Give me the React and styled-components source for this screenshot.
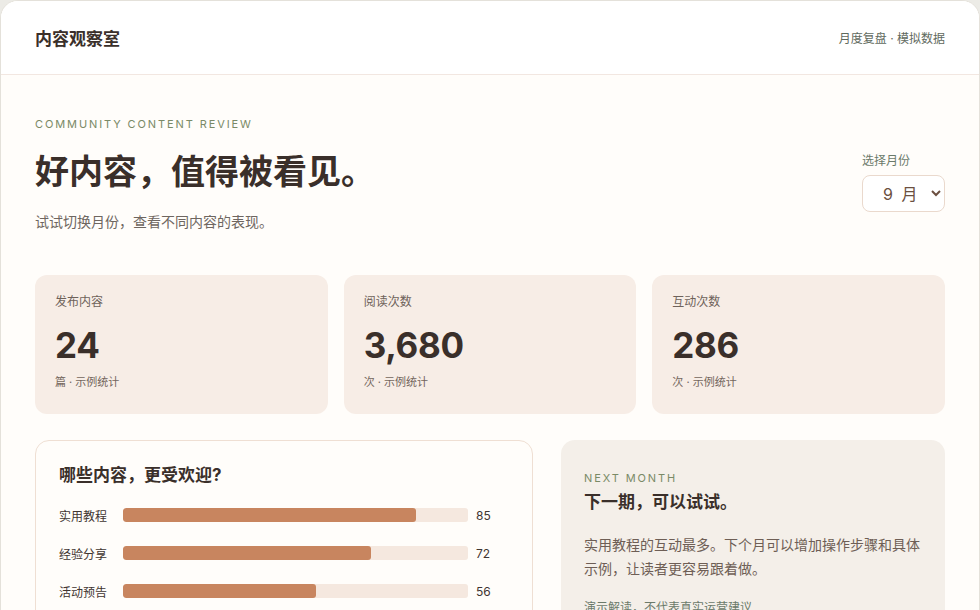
import React, { useState } from 'react';
import styled, { createGlobalStyle } from 'styled-components';

const GlobalStyle = createGlobalStyle`
  html, body {
    margin: 0;
    padding: 0;
    background: #ecebe6;
  }
  body {
    font-family: Inter, "Noto Sans CJK SC", sans-serif;
    color: #3a2f2a;
  }
`;

const Frame = styled.div`
  width: 980px;
  box-sizing: border-box;
  border: 1px solid #e4e1da;
  border-radius: 18px;
  overflow: hidden;
  background: #fffdfa;
`;

const Header = styled.header`
  height: 73px;
  padding: 0 34px;
  display: flex;
  align-items: center;
  justify-content: space-between;
  background: #ffffff;
  border-bottom: 1px solid #f2e7e1;
`;

const Brand = styled.div`
  font-size: 17px;
  font-weight: 700;
  color: #3a2f2a;
`;

const HeaderNote = styled.div`
  font-size: 12px;
  color: #5f6a5e;
`;

const Main = styled.main`
  padding: 41px 34px 40px;
`;

const Hero = styled.section`
  display: flex;
  justify-content: space-between;
  align-items: flex-end;
`;

const Eyebrow = styled.div`
  font-size: 11px;
  line-height: 16px;
  letter-spacing: 1.9px;
  color: #7a8a66;
  text-transform: uppercase;
`;

const Title = styled.h1`
  margin: 19px 0 0;
  font-size: 34px;
  line-height: 41px;
  font-weight: 700;
  color: #3a2f2a;
`;

const Subtitle = styled.p`
  margin: 20px 0 0;
  font-size: 14px;
  line-height: 20px;
  color: #6e6660;
`;

const MonthControl = styled.label`
  display: flex;
  flex-direction: column;
  gap: 6px;
  margin-bottom: 20px;
  font-size: 12px;
  line-height: 16px;
  color: #6b7a6a;
`;

const Select = styled.select`
  width: 83px;
  height: 37px;
  padding: 0 8px 0 16px;
  border: 1px solid #ead9cd;
  border-radius: 8px;
  background: #ffffff;
  font-family: Inter, "Noto Sans CJK SC", sans-serif;
  font-size: 16px;
  letter-spacing: 2px;
  color: #6b4f40;
`;

const Stats = styled.section`
  margin-top: 43px;
  display: grid;
  grid-template-columns: repeat(3, 1fr);
  gap: 16px;
`;

const StatCard = styled.div`
  height: 139px;
  box-sizing: border-box;
  padding: 19px 20px;
  border-radius: 12px;
  background: #f7ede6;
`;

const StatLabel = styled.div`
  font-size: 12px;
  line-height: 16px;
  color: #6e625a;
`;

const StatValue = styled.div`
  margin-top: 13px;
  font-size: 35px;
  line-height: 44px;
  font-weight: 700;
  letter-spacing: -0.3px;
  color: #3a2f2a;
`;

const StatNote = styled.div`
  margin-top: 7px;
  font-size: 11px;
  line-height: 16px;
  color: #74665d;
`;

const Lower = styled.section`
  margin-top: 26px;
  display: grid;
  grid-template-columns: 498px 1fr;
  gap: 28px;
  align-items: start;
`;

const ChartCard = styled.div`
  padding: 22px 24px 24px 23px;
  border: 1px solid #efdfd3;
  border-radius: 14px;
  background: #fffdfa;
`;

const CardTitle = styled.h2`
  margin: 0;
  font-size: 17px;
  line-height: 24px;
  font-weight: 700;
  color: #3a2f2a;
`;

const Rows = styled.div`
  margin-top: 18px;
  display: flex;
  flex-direction: column;
  gap: 18px;
`;

const Row = styled.div`
  display: grid;
  grid-template-columns: 56px 1fr 32px;
  column-gap: 8px;
  align-items: center;
  height: 20px;
  font-size: 12px;
  color: #3f3531;
`;

const Track = styled.div`
  height: 14px;
  border-radius: 3px;
  background: #f5e8df;
  overflow: hidden;
`;

const Fill = styled.div`
  height: 100%;
  border-radius: 3px;
  background: #c8855f;
`;

const Value = styled.span`
  font-size: 12px;
  color: #3f3531;
`;

const AdviceCard = styled.div`
  padding: 30px 20px 30px 23px;
  border-radius: 14px;
  background: #f4efe9;
`;

const AdviceTitle = styled(CardTitle)`
  margin-top: 4px;
`;

const AdviceText = styled.p`
  margin: 19px 0 0;
  font-size: 14px;
  line-height: 24px;
  color: #6e5e55;
`;

const AdviceNote = styled.p`
  margin: 19px 0 0;
  font-size: 12px;
  line-height: 16px;
  color: #6b7a6a;
`;

const data = {
  8: { posts: '21', reads: '3,120', actions: '241', bars: [['实用教程', 78], ['经验分享', 69], ['活动预告', 60]] },
  9: { posts: '24', reads: '3,680', actions: '286', bars: [['实用教程', 85], ['经验分享', 72], ['活动预告', 56]] },
  10: { posts: '27', reads: '4,010', actions: '312', bars: [['实用教程', 88], ['经验分享', 75], ['活动预告', 52]] },
};

const App = () => {
  const [month, setMonth] = useState('9');
  const current = data[month];

  return (
    <>
      <GlobalStyle />
      <Frame>
        <Header>
          <Brand>内容观察室</Brand>
          <HeaderNote>月度复盘 · 模拟数据</HeaderNote>
        </Header>
        <Main>
          <Hero>
            <div>
              <Eyebrow>Community Content Review</Eyebrow>
              <Title>好内容，值得被看见。</Title>
              <Subtitle>试试切换月份，查看不同内容的表现。</Subtitle>
            </div>
            <MonthControl>
              选择月份
              <Select value={month} onChange={(e) => setMonth(e.target.value)}>
                <option value="8">8 月</option>
                <option value="9">9 月</option>
                <option value="10">10 月</option>
              </Select>
            </MonthControl>
          </Hero>

          <Stats>
            <StatCard>
              <StatLabel>发布内容</StatLabel>
              <StatValue>{current.posts}</StatValue>
              <StatNote>篇 · 示例统计</StatNote>
            </StatCard>
            <StatCard>
              <StatLabel>阅读次数</StatLabel>
              <StatValue>{current.reads}</StatValue>
              <StatNote>次 · 示例统计</StatNote>
            </StatCard>
            <StatCard>
              <StatLabel>互动次数</StatLabel>
              <StatValue>{current.actions}</StatValue>
              <StatNote>次 · 示例统计</StatNote>
            </StatCard>
          </Stats>

          <Lower>
            <ChartCard>
              <CardTitle>哪些内容，更受欢迎?</CardTitle>
              <Rows>
                {current.bars.map(([name, score]) => (
                  <Row key={name}>
                    <span>{name}</span>
                    <Track>
                      <Fill style={{ width: `${score}%` }} />
                    </Track>
                    <Value>{score}</Value>
                  </Row>
                ))}
              </Rows>
            </ChartCard>
            <AdviceCard>
              <Eyebrow>Next Month</Eyebrow>
              <AdviceTitle>下一期，可以试试。</AdviceTitle>
              <AdviceText>
                实用教程的互动最多。下个月可以增加操作步骤和具体示例，让读者更容易跟着做。
              </AdviceText>
              <AdviceNote>演示解读，不代表真实运营建议</AdviceNote>
            </AdviceCard>
          </Lower>
        </Main>
      </Frame>
    </>
  );
};

export default App;
